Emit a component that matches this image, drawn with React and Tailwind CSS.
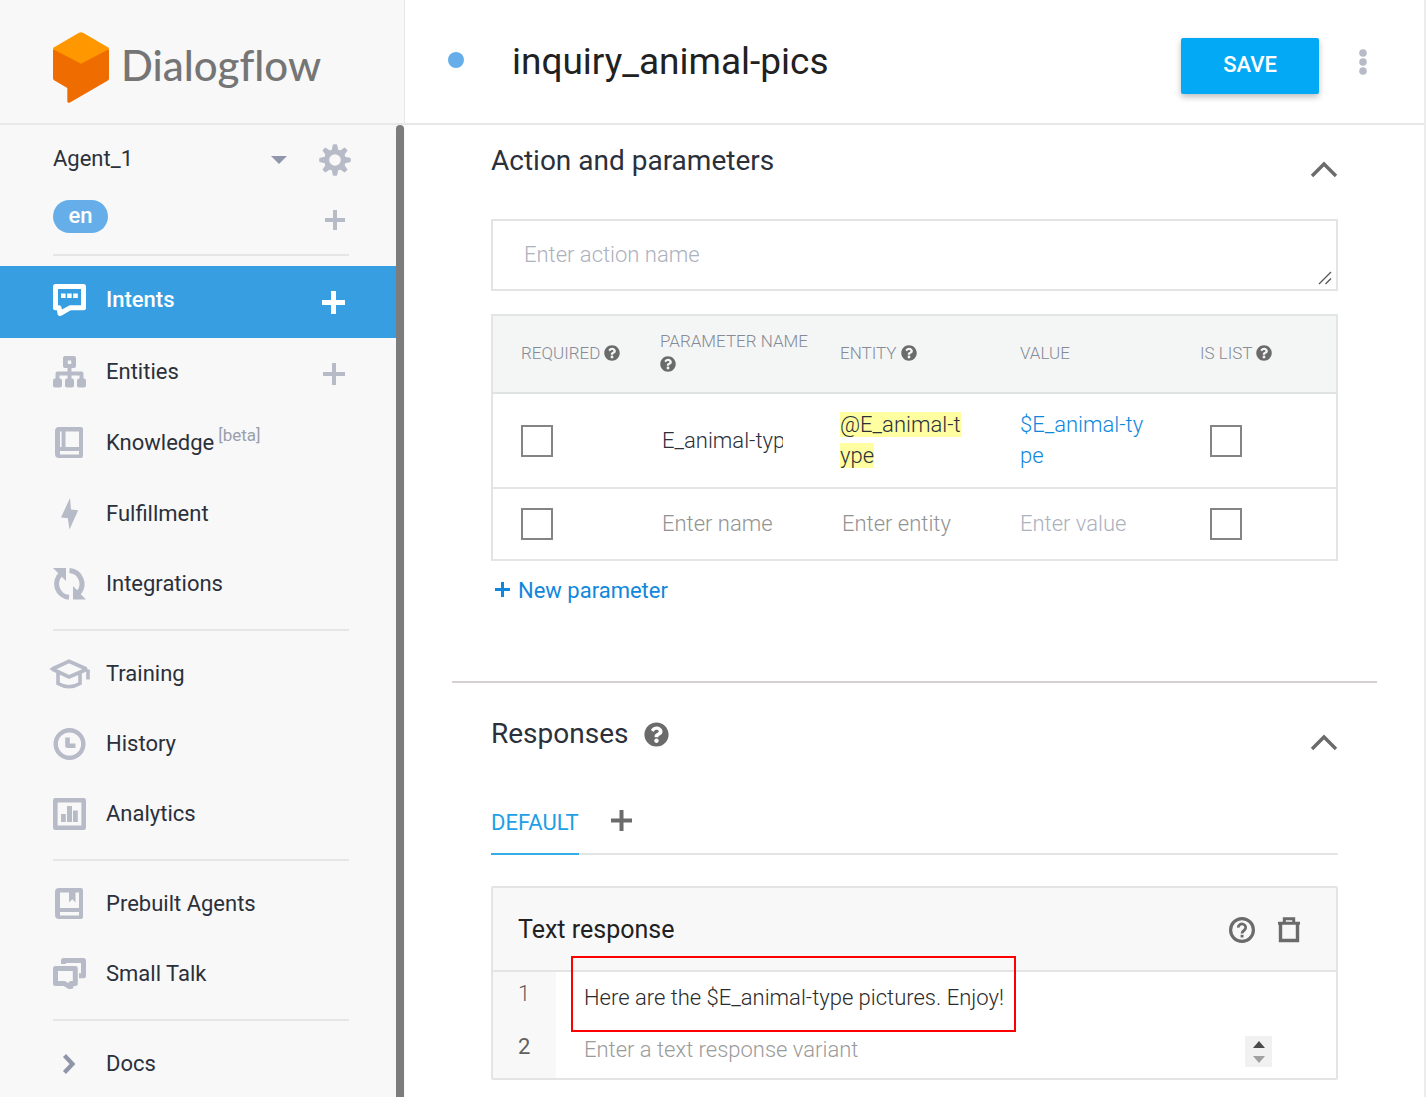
import React from "react";
import { FaQuestionCircle } from "react-icons/fa";

const Icon = ({ w = 33, h = 32, children, className = "" }) => (
  <svg
    width={w}
    height={h}
    viewBox={`0 0 ${w} ${h}`}
    fill="currentColor"
    aria-hidden="true"
    className={`shrink-0 ${className}`}
  >
    {children}
  </svg>
);

const IntentsIcon = () => (
  <Icon h={33}>
    <path d="M2.5 2.5H30.5V23.8H17L7 29.5L6 23.8H2.5Z" fill="none" stroke="currentColor" strokeWidth="5" strokeLinejoin="round" />
    <path d="M8 9.5h4.6v4.6H8zM14.1 9.5h4.6v4.6h-4.6zM20.2 9.5h4.6v4.6h-4.6z" />
  </Icon>
);

const EntitiesIcon = () => (
  <Icon>
    <path fillRule="evenodd" d="M12 0h9a2 2 0 0 1 2 2v8a2 2 0 0 1-2 2h-9a2 2 0 0 1-2-2V2a2 2 0 0 1 2-2zM14.8 4.5v3.5h3.4V4.5z" />
    <path d="M16.5 11V24M4.5 24V17.5H28.5V24" fill="none" stroke="currentColor" strokeWidth="4" strokeLinejoin="round" />
    <rect x="0" y="22.500" width="9" height="9" rx="2" />
    <rect x="12" y="22.500" width="9" height="9" rx="2" />
    <rect x="24" y="22.500" width="9" height="9" rx="2" />
  </Icon>
);

const KnowledgeIcon = () => (
  <Icon>
    <path
      fillRule="evenodd"
      d="M6 0H28a2 2 0 0 1 2 2V29a2 2 0 0 1-2 2H6a4 4 0 0 1-4-4V4a4 4 0 0 1 4-4zM7 4.500V20h1.600V4.500zM12.500 4.500V20H26V4.500zM7 24v3.500H26V24z"
    />
  </Icon>
);

const FulfillmentIcon = () => (
  <Icon>
    <path d="M17 0L8 19.500L14.800 20.200L16.500 31.500L25.200 12.300L18 11.500Z" />
  </Icon>
);

const IntegrationsIcon = () => (
  <Icon>
    <path d="M0 0H13V13L9 9L5.500 5.500Z" />
    <path d="M33 31.500H20V18L24 22L27.500 26Z" />
    <path d="M8.500 5.500A13.500 13.500 0 0 0 16 29.300M16.500 2.500A13.500 13.500 0 0 1 25 25.500" fill="none" stroke="currentColor" strokeWidth="5" />
  </Icon>
);

const TrainingIcon = () => (
  <Icon w={41} h={30} className="-mx-1">
    <path
      d="M3.200 10L20 2.300L37.500 10M39 10.500V20.500M3.200 10L20 18L38.500 10M9 13.500V24.500Q20 31 31 24.500V13.500"
      fill="none"
      stroke="currentColor"
      strokeWidth="3.600"
    />
    <path d="M0 9.900L5 7.700V12.200Z" />
  </Icon>
);

const HistoryIcon = () => (
  <Icon>
    <circle cx="16.500" cy="16" r="13.800" fill="none" stroke="currentColor" strokeWidth="4.400" />
    <path d="M14.500 9.500V17.800H22.500" fill="none" stroke="currentColor" strokeWidth="4.600" strokeLinejoin="round" />
  </Icon>
);

const AnalyticsIcon = () => (
  <Icon>
    <rect x="2.300" y="2.300" width="28.400" height="27.400" fill="none" stroke="currentColor" strokeWidth="4.600" strokeLinejoin="round" />
    <path d="M8 16h4.800v8H8zM14 8h5v16h-5zM20 12.500h4.800V24H20z" />
  </Icon>
);

const PrebuiltIcon = () => (
  <Icon>
    <path
      fillRule="evenodd"
      d="M6 0H28a2 2 0 0 1 2 2V29a2 2 0 0 1-2 2H6a4 4 0 0 1-4-4V4a4 4 0 0 1 4-4zM7 4.500V20H26V4.500H22.500V14.500L19.300 11.300L16 14.500V4.500zM7 24v3.500H26V24z"
    />
  </Icon>
);

const SmallTalkIcon = () => (
  <Icon>
    <path d="M10.500 6V2.500H30.500V17.800H26" fill="none" stroke="currentColor" strokeWidth="5" strokeLinejoin="round" />
    <path d="M2.500 10.500H22.300V25.500H18V28.500H16L11.500 25.500H2.500Z" fill="none" stroke="currentColor" strokeWidth="5" strokeLinejoin="round" />
  </Icon>
);

const DocsIcon = () => (
  <Icon className="text-[#8f96aa]">
    <path d="M11.500 7.500L19.500 16L11.500 24.500" fill="none" stroke="currentColor" strokeWidth="4.200" />
  </Icon>
);

const GearIcon = () => (
  <Icon w={32} h={32}>
    <circle cx="16" cy="16" r="8.300" fill="none" stroke="currentColor" strokeWidth="5" />
    {[0, 45, 90, 135, 180, 225, 270, 315].map((a) => (
      <path key={a} d="M13 8L14.300 0.800H17.700L19 8Z" transform={`rotate(${a} 16 16)`} stroke="currentColor" strokeWidth="1" strokeLinejoin="round" />
    ))}
  </Icon>
);

const PlusIcon = ({ s = 20, t = 4 }) => (
  <Icon w={s} h={s}>
    <path d={`M0 ${s / 2}H${s}M${s / 2} 0V${s}`} stroke="currentColor" strokeWidth={t} />
  </Icon>
);

const ChevronUp = () => (
  <Icon w={28} h={17}>
    <path d="M2 15L14 3L26 15" fill="none" stroke="currentColor" strokeWidth="3.400" />
  </Icon>
);

const HelpOutlineIcon = () => (
  <Icon w={26} h={26}>
    <circle cx="13" cy="13" r="11.400" fill="none" stroke="currentColor" strokeWidth="3.200" />
    <path d="M9.300 10.600A3.700 3.500 0 1 1 15.500 13Q13 14.700 13 16.500" fill="none" stroke="currentColor" strokeWidth="2.800" />
    <rect x="11.600" y="17.800" width="2.900" height="2.700" />
  </Icon>
);

const TrashIcon = () => (
  <Icon w={24} h={26}>
    <path d="M3.500 6V23.500H20.500V6" fill="none" stroke="currentColor" strokeWidth="3.400" />
    <path d="M1 6.200H23M7.300 6V1.800H16.700V6" fill="none" stroke="currentColor" strokeWidth="3" />
  </Icon>
);

const Logo = () => (
  <svg width="56" height="71" viewBox="0 0 56 71" aria-hidden="true" className="shrink-0">
    <path d="M0 17.500L28 12L56 17.500V46.500C56 47.600 55.500 48.200 54.500 48.800L17 70.500C15.500 71.200 14.300 70.700 14.300 69V56L1.500 48.500C0.500 47.900 0 47.300 0 46.300Z" fill="#ef6c00" />
    <path d="M0.700 15.500L26 0.700C27.300 0 28.700 0 30 0.700L55.300 15.500C56.200 16.100 56.200 17 55.300 17.500L28 31.800L0.700 17.500C-0.200 17 -0.200 16.100 0.700 15.500Z" fill="#ff9800" />
  </svg>
);

const NavItem = ({ icon, label, tag, active, add, height = "h-[70px]" }) => (
  <li
    className={`flex items-center justify-between pr-[51px] pl-[53px] ${height} ${
      active ? "bg-[#379fe1] text-white" : "text-[#b7bbc8]"
    }`}
  >
    <a href="#" className="flex items-center gap-5 pb-1">
      {icon}
      <span className={`text-[22px] leading-7 ${active ? "font-medium text-white" : "text-[#2b303b]"}`}>
        {label}
        {tag && <sup className="ml-1 text-[17px] font-normal text-[#9a9fae]">{tag}</sup>}
      </span>
    </a>
    {add && (
      <button type="button" aria-label={`Create ${label}`} className="flex">
        {active ? <PlusIcon s={23} t={5} /> : <PlusIcon s={22} t={4} />}
      </button>
    )}
  </li>
);

const Divider = () => <li role="separator" className="mt-2 mr-[47px] mb-2.5 ml-[53px] h-0.5 bg-[#e6e6e6]" />;

const Sidebar = () => (
  <aside className="flex w-[405px] shrink-0 flex-col bg-[#f8f8f8]">
    <div className="flex h-[125px] shrink-0 items-center gap-3 border-r border-b-2 border-[#e8e8e8] pt-3 pl-[53px]">
      <Logo />
      <span className="pb-1.5 font-['Lato',sans-serif] text-[42px] leading-none font-medium text-[#757575] [font-variant-ligatures:none]">
        Dialogflow
      </span>
    </div>
    <div className="flex min-h-0 flex-1">
      <nav className="min-w-0 flex-1 overflow-hidden" aria-label="Agent">
        <div className="flex flex-col gap-5 pt-[18px] pr-[45px] pl-[53px]">
          <div className="flex h-[34px] items-center gap-8">
            <button type="button" className="flex flex-1 items-center justify-between">
              <span className="pb-0.5 text-[22px] leading-7 text-[#2b303b]">Agent_1</span>
              <svg width="16" height="8" viewBox="0 0 16 8" aria-hidden="true">
                <path d="M0 0H16L8 8Z" fill="#9298ab" />
              </svg>
            </button>
            <button type="button" aria-label="Settings" className="flex text-[#b7bbc8]">
              <GearIcon />
            </button>
          </div>
          <div className="flex h-[38px] items-center justify-between pr-1.5">
            <span className="flex h-[33px] w-[55px] items-center justify-center rounded-full bg-[#66aee9] text-[22px] leading-none font-medium text-white">
              en
            </span>
            <button type="button" aria-label="Add language" className="flex pt-2 text-[#b7bbc8]">
              <PlusIcon s={20} t={4} />
            </button>
          </div>
        </div>
        <ul className="flex flex-col">
          <li role="separator" className="mt-[19px] mr-[47px] mb-2.5 ml-[53px] h-0.5 bg-[#e6e6e6]" />
          <NavItem height="h-[72px]" active add icon={<IntentsIcon />} label="Intents" />
          <NavItem height="h-[71px]" add icon={<EntitiesIcon />} label="Entities" />
          <NavItem height="h-[71px]" icon={<KnowledgeIcon />} label="Knowledge" tag="[beta]" />
          <NavItem height="h-[71px]" icon={<FulfillmentIcon />} label="Fulfillment" />
          <NavItem icon={<IntegrationsIcon />} label="Integrations" />
          <Divider />
          <NavItem icon={<TrainingIcon />} label="Training" />
          <NavItem icon={<HistoryIcon />} label="History" />
          <NavItem icon={<AnalyticsIcon />} label="Analytics" />
          <Divider />
          <NavItem icon={<PrebuiltIcon />} label="Prebuilt Agents" />
          <NavItem icon={<SmallTalkIcon />} label="Small Talk" />
          <Divider />
          <NavItem icon={<DocsIcon />} label="Docs" />
        </ul>
      </nav>
      <div className="mr-px w-2 shrink-0 rounded-t bg-[#7c7c7c]" />
    </div>
  </aside>
);

const Help = () => <FaQuestionCircle size={16} className="inline-block align-[-2px] text-[#6b6b6b]" aria-label="Help" />;

const Box = ({ label }) => (
  <input
    type="checkbox"
    aria-label={label}
    className="block size-8 appearance-none border-2 border-[#848484] bg-white checked:bg-[#379fe1]"
  />
);

const th = "pb-0.5 pl-7 text-left align-middle text-[17px] leading-[23px] font-light text-[#858a97]";
const field = "block w-full min-w-0 bg-transparent text-[22px] leading-7 font-light outline-none";

const ParameterTable = () => (
  <table className="w-full table-fixed border-collapse border-2 border-[#e3e5e5]">
    <colgroup>
      <col className="w-[140px]" />
      <col />
      <col />
      <col />
      <col className="w-[165px]" />
    </colgroup>
    <thead>
      <tr className="h-[78px] border-b-2 border-[#e0e3e3] bg-[#f4f6f5]">
        <th className={th}>REQUIRED <Help /></th>
        <th className={th}>PARAMETER NAME <Help /></th>
        <th className={th}>ENTITY <Help /></th>
        <th className={th}>VALUE</th>
        <th className={th}>IS LIST <Help /></th>
      </tr>
    </thead>
    <tbody className="text-[22px] leading-[31px] font-light">
      <tr className="h-[95px] border-b-2 border-[#e3e5e5]">
        <td className="pl-7"><Box label="Required: E_animal-type" /></td>
        <td className="pr-[29px] pl-[30px]">
          <input aria-label="Parameter name" defaultValue="E_animal-type" className={`${field} text-[#2b303b]`} />
        </td>
        <td className="pr-6 pb-0.5 pl-7 break-all text-[#2b303b]">
          <span className="bg-[#fffea0]">@E_animal-type</span>
        </td>
        <td className="pr-6 pb-0.5 pl-7 break-all text-[#0f87dc]">$E_animal-type</td>
        <td className="pl-[38px]"><Box label="Is list: E_animal-type" /></td>
      </tr>
      <tr className="h-[72px]">
        <td className="pl-7"><Box label="Required: new parameter" /></td>
        <td className="pr-7 pl-[30px]">
          <input aria-label="New parameter name" placeholder="Enter name" className={`${field} placeholder:text-[#939393]`} />
        </td>
        <td className="pr-6 pl-[30px]">
          <input aria-label="New parameter entity" placeholder="Enter entity" className={`${field} placeholder:text-[#939393]`} />
        </td>
        <td className="pr-6 pl-7">
          <input aria-label="New parameter value" placeholder="Enter value" className={`${field} placeholder:text-[#acb1be]`} />
        </td>
        <td className="pl-[38px]"><Box label="Is list: new parameter" /></td>
      </tr>
    </tbody>
  </table>
);

const ActionSection = () => (
  <section className="flex flex-col px-[86px] pt-4">
    <div className="flex h-11 items-start justify-between">
      <h2 className="text-[28px] leading-10 text-[#2b303b]">Action and parameters</h2>
      <button type="button" aria-label="Collapse action and parameters" className="mt-5 flex text-[#6b6b6b]">
        <ChevronUp />
      </button>
    </div>
    <div className="relative mt-[34px]">
      <textarea
        rows={1}
        aria-label="Action name"
        placeholder="Enter action name"
        className="block h-[72px] w-full resize-none border-2 border-[#e3e5e5] bg-white px-[31px] py-5 text-[22px] leading-7 font-light outline-none placeholder:text-[#acb1be]"
      />
      <svg width="14" height="14" viewBox="0 0 14 14" aria-hidden="true" className="pointer-events-none absolute right-1.5 bottom-1.5">
        <path d="M1 13L13 1M7.500 13L13 7.500" stroke="#555" strokeWidth="1.300" />
      </svg>
    </div>
    <div className="mt-[23px]">
      <ParameterTable />
    </div>
    <button type="button" className="mt-4 ml-1 flex items-center gap-2 self-start text-[22px] leading-7 text-[#0f87dc]">
      <span className="pb-1"><PlusIcon s={15} t={3} /></span>
      New parameter
    </button>
  </section>
);

const ResponsesSection = () => (
  <section className="flex flex-col px-[86px] pt-[31px]">
    <div className="flex h-11 items-start justify-between">
      <h2 className="flex items-center gap-4 text-[28px] leading-10 text-[#2b303b]">
        Responses
        <FaQuestionCircle size={25} className="text-[#6b6b6b]" aria-label="Help" />
      </h2>
      <button type="button" aria-label="Collapse responses" className="mt-5 flex text-[#6b6b6b]">
        <ChevronUp />
      </button>
    </div>
    <div role="tablist" className="mt-[33px] flex h-16 items-stretch gap-8 border-b-2 border-[#e3e5e5]">
      <button
        type="button"
        role="tab"
        aria-selected="true"
        className="-mb-0.5 border-b-2 border-[#35aee8] pt-0.5 text-[22px] leading-7 text-[#1ea0e6]"
      >
        DEFAULT
      </button>
      <button type="button" aria-label="Add response tab" className="flex items-center pb-1 text-[#6b6b6b]">
        <PlusIcon s={21} t={4} />
      </button>
    </div>
    <div className="mt-[31px] rounded-xs border-2 border-[#e3e5e5]">
      <div className="flex h-[84px] items-center justify-between border-b-2 border-[#e3e5e5] bg-[#f8f8f8] pr-[35px] pl-[25px]">
        <h3 className="pt-0.5 text-[25px] leading-8 text-[#212121]">Text response</h3>
        <div className="flex items-center gap-[22px] pt-0.5 text-[#6b6b6b]">
          <button type="button" aria-label="Help" className="flex">
            <HelpOutlineIcon />
          </button>
          <button type="button" aria-label="Delete" className="flex">
            <TrashIcon />
          </button>
        </div>
      </div>
      <ol className="text-[22px] leading-7">
        <li className="relative flex h-[53px]">
          <span className="w-[63px] shrink-0 bg-[#f8f8f8] pt-2 pl-[25px] font-light text-[#5f5f5f]">1</span>
          <input
            aria-label="Text response 1"
            defaultValue="Here are the $E_animal-type pictures. Enjoy!"
            className={`${field} pb-0.5 pl-7 text-[#2b2b2b]`}
          />
          <div className="pointer-events-none absolute -top-4 left-[78px] h-[76px] w-[445px] border-2 border-[#ff0000]" />
        </li>
        <li className="flex h-[53px] items-center">
          <span className="h-full w-[63px] shrink-0 bg-[#f8f8f8] pt-2 pl-[25px] text-[#5f5f5f]">2</span>
          <input aria-label="Text response 2" placeholder="Enter a text response variant" className={`${field} pb-1 pl-7 placeholder:text-[#9b9b9b]`} />
          <span className="mr-16 flex h-[31px] w-[27px] shrink-0 flex-col items-center justify-center gap-2 bg-[#f1f1f1]">
            <svg width="12" height="7" viewBox="0 0 12 7" aria-hidden="true"><path d="M0 7L6 0L12 7Z" fill="#4a4a4a" /></svg>
            <svg width="12" height="7" viewBox="0 0 12 7" aria-hidden="true"><path d="M0 0L6 7L12 0Z" fill="#a0a0a0" /></svg>
          </span>
        </li>
      </ol>
    </div>
  </section>
);

export default function App() {
  return (
    <div className="flex h-screen overflow-hidden bg-white font-['Roboto',sans-serif]">
      <Sidebar />
      <main className="flex min-w-0 flex-1 flex-col overflow-hidden border-r-2 border-[#ececec] bg-white">
        <header className="flex h-[125px] shrink-0 items-center border-b-2 border-[#e8e8e8] pr-[57px] pl-[43px]">
          <span className="mb-1 size-4 shrink-0 rounded-full bg-[#66aee9]" />
          <h1 className="ml-12 min-w-0 flex-1 text-[37px] leading-[48px] text-[#212121]">inquiry_animal-pics</h1>
          <button
            type="button"
            className="mt-2 flex h-14 w-[138px] items-center justify-center rounded-xs bg-[#03a9f4] pb-0.5 text-[22px] leading-7 font-medium text-white shadow-[0_3px_6px_rgba(0,0,0,0.26)]"
          >
            SAVE
          </button>
          <button type="button" aria-label="More options" className="ml-10 flex text-[#b7bbc8]">
            <Icon w={8} h={26}>
              <circle cx="4" cy="4" r="3.800" />
              <circle cx="4" cy="13" r="3.800" />
              <circle cx="4" cy="22" r="3.800" />
            </Icon>
          </button>
        </header>
        <ActionSection />
        <hr className="mx-[47px] mt-[76px] border-t-2 border-[#d5d1d3]" />
        <ResponsesSection />
      </main>
    </div>
  );
}
